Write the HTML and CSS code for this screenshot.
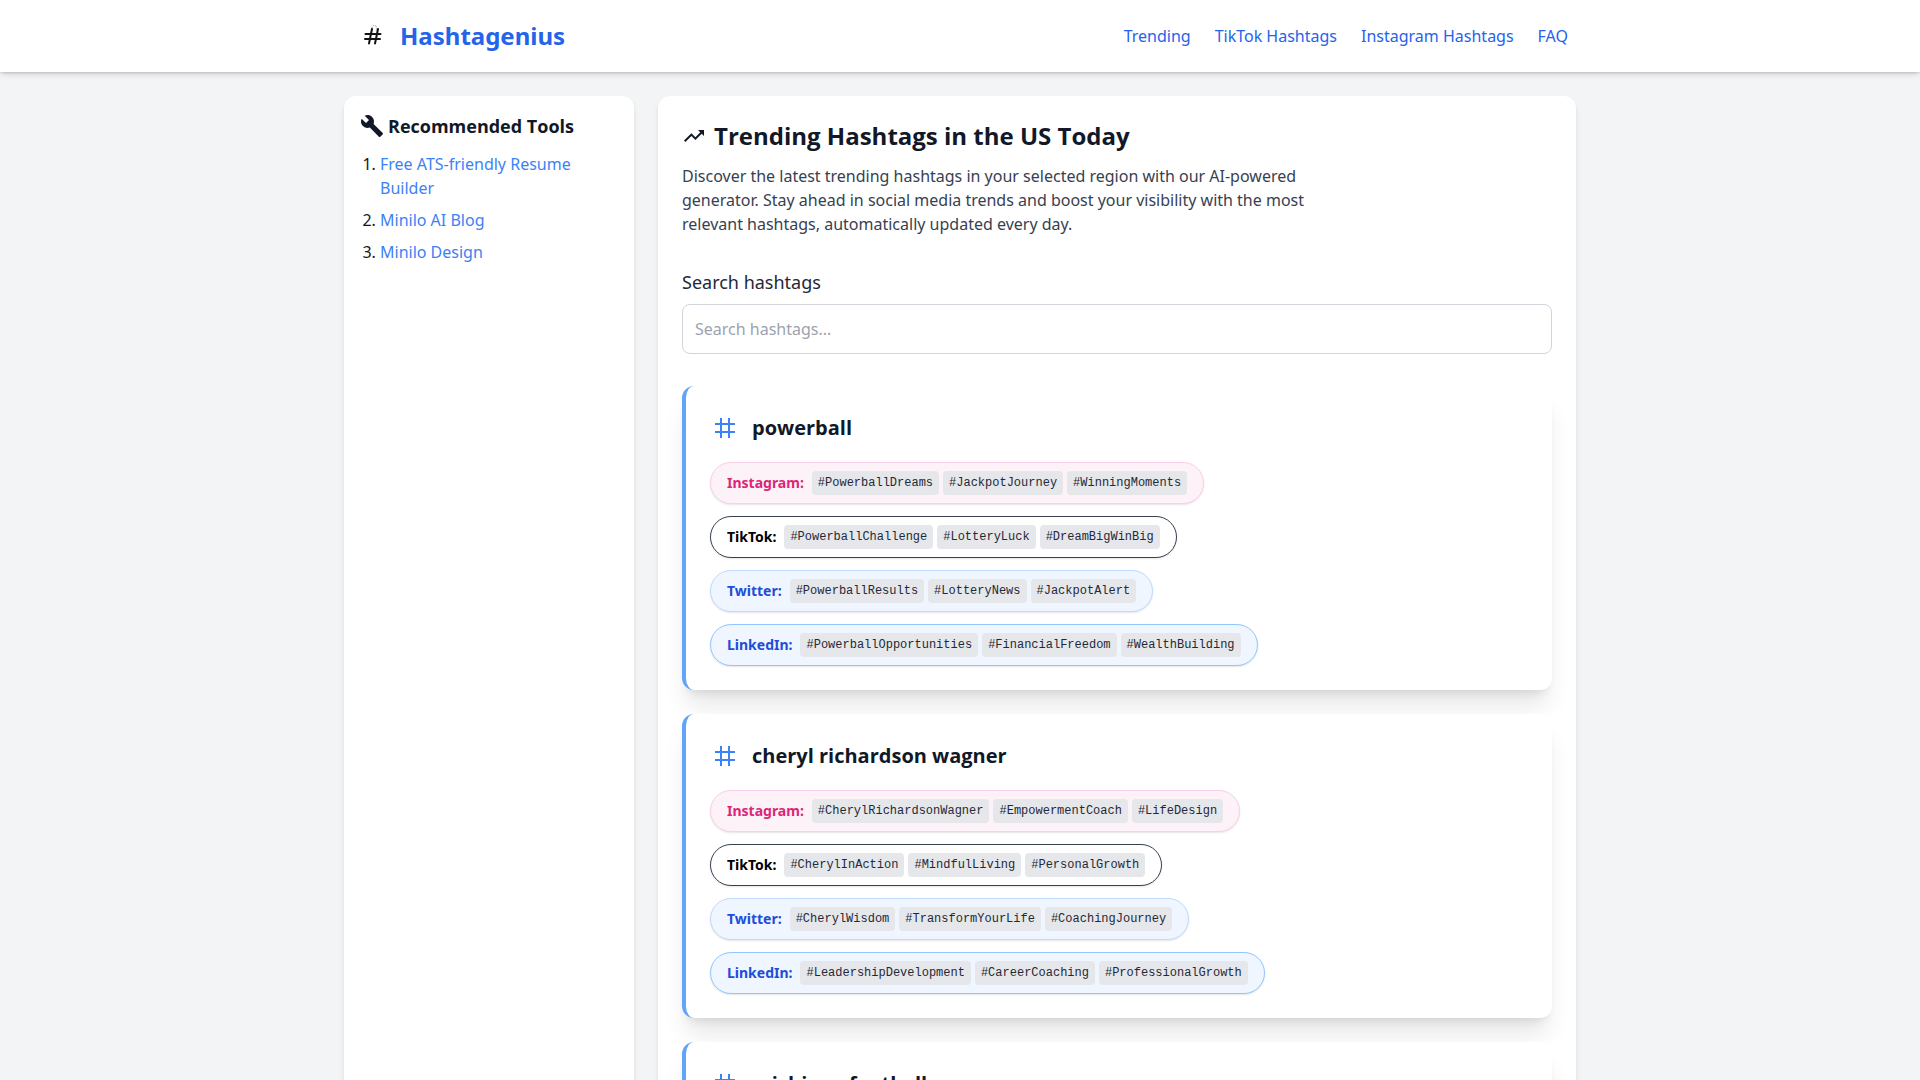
FILE: index.html
```
<!DOCTYPE html>
<html lang="en">
<head>
    <meta charset="UTF-8">
    <meta name="viewport" content="width=device-width, initial-scale=1.0">
    <title>Hashtagenius</title>
    <link rel="stylesheet" href="styles.css">
</head>
<body>

    <svg width="0" height="0" class="sprite">
        <symbol id="icon-tag" viewBox="0 0 30 30">
            <path d="M11 5v20M19 5v20M5 11h20M5 19h20" fill="none" stroke="#3b82f6" stroke-width="2"/>
        </symbol>
    </svg>

    <header class="header">
        <div class="header-inner">
            <a class="brand" href="#">
                <svg class="logo" viewBox="0 0 40 40">
                    <path d="M20 13v-2l2-2 2 1 1 2-1 3" fill="none" stroke="#aaa" stroke-width="1" stroke-dasharray="2 1"/>
                    <path d="M20 13l-3 14.500M26 13l-3 14.500M13.500 18h15M13 23h15" fill="none" stroke="#111" stroke-width="2" stroke-linecap="round"/>
                </svg>
                <span class="brand-name">Hashtagenius</span>
            </a>
            <nav class="nav">
                <a href="#">Trending</a>
                <a href="#">TikTok Hashtags</a>
                <a href="#">Instagram Hashtags</a>
                <a href="#">FAQ</a>
            </nav>
        </div>
    </header>

    <div class="layout">
        <aside class="sidebar">
            <h2 class="sidebar-title">
                <svg class="icon" viewBox="0 0 24 24"><path d="M22.7 19l-9.100-9.100c.9-2.300.4-5-1.500-6.900-2-2-5-2.400-7.400-1.300L9 6 6 9 1.600 4.700C.4 7.100.9 10.100 2.900 12.100c1.900 1.900 4.600 2.400 6.900 1.500l9.100 9.100c.4.4 1 .4 1.400 0l2.300-2.300c.5-.4.5-1.100.1-1.400z"/></svg>
                Recommended Tools
            </h2>
            <ol class="tools">
                <li><a href="#">Free ATS-friendly Resume Builder</a></li>
                <li><a href="#">Minilo AI Blog</a></li>
                <li><a href="#">Minilo Design</a></li>
            </ol>
        </aside>

        <main class="main">
            <h1 class="page-title">
                <svg class="icon" viewBox="0 0 24 24"><path d="M16 6l2.290 2.290-4.880 4.880-4-4L2 16.590 3.410 18l6-6 4 4 6.300-6.290L22 12V6z"/></svg>
                Trending Hashtags in the US Today
            </h1>
            <p class="intro">Discover the latest trending hashtags in your selected region with our AI-powered generator. Stay ahead in social media trends and boost your visibility with the most relevant hashtags, automatically updated every day.</p>

            <label class="search-label" for="search">Search hashtags</label>
            <input class="search" type="text" id="search" placeholder="Search hashtags...">

            <div class="cards">
                <section class="card">
                    <h2 class="card-title"><svg class="tag-icon"><use href="#icon-tag"/></svg>powerball</h2>
                    <div class="pill instagram"><strong>Instagram:</strong><code>#PowerballDreams</code><code>#JackpotJourney</code><code>#WinningMoments</code></div>
                    <div class="pill tiktok"><strong>TikTok:</strong><code>#PowerballChallenge</code><code>#LotteryLuck</code><code>#DreamBigWinBig</code></div>
                    <div class="pill twitter"><strong>Twitter:</strong><code>#PowerballResults</code><code>#LotteryNews</code><code>#JackpotAlert</code></div>
                    <div class="pill linkedin"><strong>LinkedIn:</strong><code>#PowerballOpportunities</code><code>#FinancialFreedom</code><code>#WealthBuilding</code></div>
                </section>

                <section class="card">
                    <h2 class="card-title"><svg class="tag-icon"><use href="#icon-tag"/></svg>cheryl richardson wagner</h2>
                    <div class="pill instagram"><strong>Instagram:</strong><code>#CherylRichardsonWagner</code><code>#EmpowermentCoach</code><code>#LifeDesign</code></div>
                    <div class="pill tiktok"><strong>TikTok:</strong><code>#CherylInAction</code><code>#MindfulLiving</code><code>#PersonalGrowth</code></div>
                    <div class="pill twitter"><strong>Twitter:</strong><code>#CherylWisdom</code><code>#TransformYourLife</code><code>#CoachingJourney</code></div>
                    <div class="pill linkedin"><strong>LinkedIn:</strong><code>#LeadershipDevelopment</code><code>#CareerCoaching</code><code>#ProfessionalGrowth</code></div>
                </section>

                <section class="card">
                    <h2 class="card-title"><svg class="tag-icon"><use href="#icon-tag"/></svg>michigan football</h2>
                </section>
            </div>
        </main>
    </div>

</body>
</html>
```

FILE: styles.css
```
* { box-sizing: border-box; margin: 0; padding: 0; }
body { min-height: 100vh; background: #f3f4f6; color: #111827; font-family: "Noto Sans", "Open Sans", sans-serif; font-size: 16px; line-height: 24px; }
h1, h2 { font-family: "Open Sans", "Noto Sans", sans-serif; font-weight: 700; }
a { text-decoration: none; }
a:hover { text-decoration: underline; }
.sprite { position: absolute; }
.icon { width: 24px; height: 24px; fill: currentColor; flex-shrink: 0; }

.header { background: #fff; box-shadow: 0 4px 6px -1px rgba(0,0,0,.1), 0 2px 4px -2px rgba(0,0,0,.1), 0 1px 2px rgba(0,0,0,.1); }
.header-inner { max-width: 1280px; margin: 0 auto; padding: 16px 32px; display: flex; align-items: center; justify-content: space-between; }
.brand { display: flex; align-items: center; gap: 8px; color: #2563eb; }
.logo { width: 40px; height: 40px; }
.brand-name { font-size: 24px; line-height: 32px; font-weight: 700; }
.nav { display: flex; gap: 24px; }
.nav a { color: #2563eb; }

.layout { max-width: 1280px; margin: 0 auto; padding: 24px; display: grid; grid-template-columns: repeat(4, 1fr); gap: 24px; }
.sidebar, .main { background: #fff; border-radius: 12px; box-shadow: 0 4px 6px -1px rgba(0,0,0,.1), 0 2px 4px -2px rgba(0,0,0,.1); }
.sidebar { padding: 16px; }
.sidebar-title { display: flex; align-items: center; gap: 4px; font-size: 18px; line-height: 28px; margin-bottom: 12px; }
.tools { padding-left: 20px; }
.tools li { margin-bottom: 8px; }
.tools a { color: #3b82f6; }

.main { grid-column: span 3; padding: 24px; }
.page-title { display: flex; align-items: center; gap: 8px; font-size: 24px; line-height: 32px; margin-bottom: 12px; }
.intro { max-width: 672px; color: #374151; margin-bottom: 32px; }
.search-label { display: block; font-size: 18px; line-height: 28px; color: #1f2937; margin-bottom: 8px; }
.search { display: block; width: 100%; height: 50px; padding: 12px; border: 1px solid #d1d5db; border-radius: 8px; font: inherit; color: #111827; background: #fff; }
.search::placeholder { color: #9ca3af; }

.cards { margin-top: 32px; display: flex; flex-direction: column; gap: 24px; }
.card { display: flex; flex-direction: column; align-items: flex-start; gap: 12px; padding: 24px; background: #fff; border-left: 4px solid #60a5fa; border-radius: 12px; box-shadow: 0 20px 25px -5px rgba(0,0,0,.1), 0 8px 10px -6px rgba(0,0,0,.1); }
.card-title { display: flex; align-items: center; gap: 12px; height: 36px; margin-bottom: 4px; font-size: 20px; line-height: 28px; }
.tag-icon { width: 30px; height: 30px; }

.pill { display: flex; align-items: center; gap: 4px; padding: 8px 16px; border: 1px solid; border-radius: 21px; box-shadow: 0 1px 2px rgba(0,0,0,.1); font-size: 14px; }
.pill strong { font-weight: 700; margin-right: 4px; }
.pill code { padding: 4px 6px; border-radius: 4px; background: #e5e7eb; color: #1f2937; font-family: "Liberation Mono", monospace; font-size: 12px; line-height: 16px; }
.instagram { background: #fdf2f8; border-color: #fbcfe8; }
.instagram strong { color: #db2777; }
.tiktok { background: #fff; border-color: #374151; }
.tiktok strong { color: #000; }
.twitter { background: #eff6ff; border-color: #bfdbfe; }
.twitter strong { color: #1d4ed8; }
.linkedin { background: #eff6ff; border-color: #93c5fd; }
.linkedin strong { color: #1d4ed8; }
```
